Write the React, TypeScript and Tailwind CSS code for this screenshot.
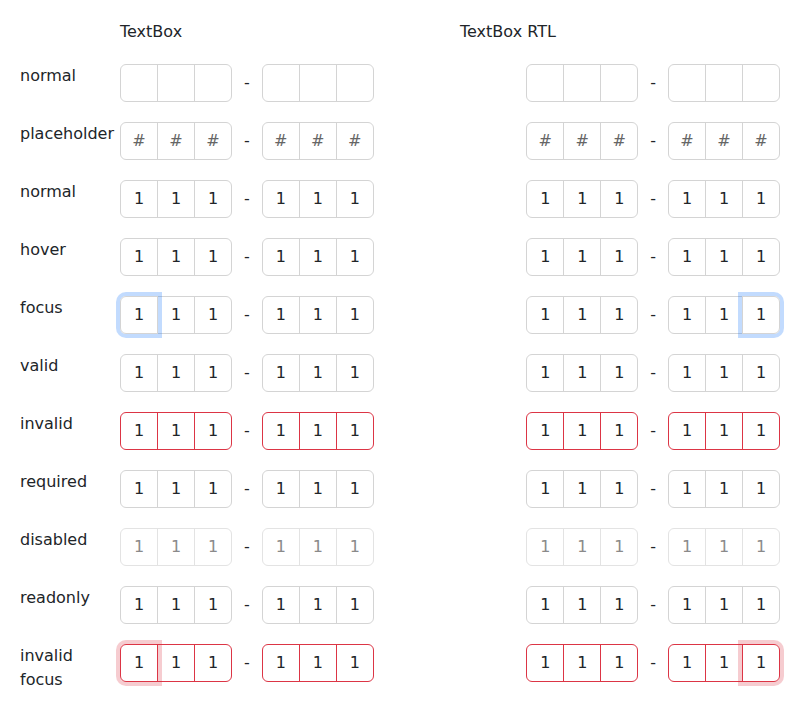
import React from "react";

type Variant =
  | "normal"
  | "placeholder"
  | "filled"
  | "focus"
  | "invalid"
  | "disabled"
  | "invalidFocus";

const rows: { label: string; v: Variant }[] = [
  { label: "normal", v: "normal" },
  { label: "placeholder", v: "placeholder" },
  { label: "normal", v: "filled" },
  { label: "hover", v: "filled" },
  { label: "focus", v: "focus" },
  { label: "valid", v: "filled" },
  { label: "invalid", v: "invalid" },
  { label: "required", v: "filled" },
  { label: "disabled", v: "disabled" },
  { label: "readonly", v: "filled" },
  { label: "invalid focus", v: "invalidFocus" },
];

function Group({ v, focusFirst }: { v: Variant; focusFirst: boolean }) {
  return (
    <div className="flex">
      {[0, 1, 2].map((i) => {
        const first = i === 0;
        const last = i === 2;
        const focused = focusFirst && first;
        const invalid = v === "invalid" || v === "invalidFocus";
        let cls =
          "relative flex h-[38px] w-[38px] items-center justify-center border text-[16px] leading-6 ";
        cls += first ? "rounded-s-md " : "-ms-px ";
        if (last) cls += "rounded-e-md ";
        if (v === "disabled") cls += "border-[#e3e3e3] text-[#8a8a8a] ";
        else if (invalid) cls += "border-[#dc3545] text-[#212529] ";
        else if (v === "placeholder") cls += "border-[#d4d4d4] text-[#666666] ";
        else cls += "border-[#d4d4d4] text-[#212529] ";
        if (focused && v === "focus")
          cls += "z-10 border-[#86b7fe] shadow-[0_0_0_4px_rgba(13,110,253,0.25)] ";
        if (focused && v === "invalidFocus")
          cls += "z-10 shadow-[0_0_0_4px_rgba(220,53,69,0.25)] ";
        const text = v === "normal" ? "" : v === "placeholder" ? "#" : "1";
        return (
          <div key={i} className={cls}>
            {text}
          </div>
        );
      })}
    </div>
  );
}

function Pair({ v }: { v: Variant }) {
  return (
    <div className="flex items-center">
      <Group v={v} focusFirst={v === "focus" || v === "invalidFocus"} />
      <span className="mx-3 text-[16px] leading-6 text-[#212529]">-</span>
      <Group v={v} focusFirst={false} />
    </div>
  );
}

export default function App() {
  return (
    <div
      className="grid grid-cols-[80px_1fr_1fr] items-start gap-5 bg-white p-5 text-[16px] leading-6 text-[#212529]"
      style={{ fontFamily: '"DejaVu Sans", sans-serif' }}
    >
      <div />
      <div>TextBox</div>
      <div>TextBox RTL</div>
      {rows.map((r, idx) => (
        <React.Fragment key={idx}>
          <div>{r.label}</div>
          <div dir="ltr" className="flex">
            <Pair v={r.v} />
          </div>
          <div dir="rtl" className="flex">
            <Pair v={r.v} />
          </div>
        </React.Fragment>
      ))}
    </div>
  );
}
